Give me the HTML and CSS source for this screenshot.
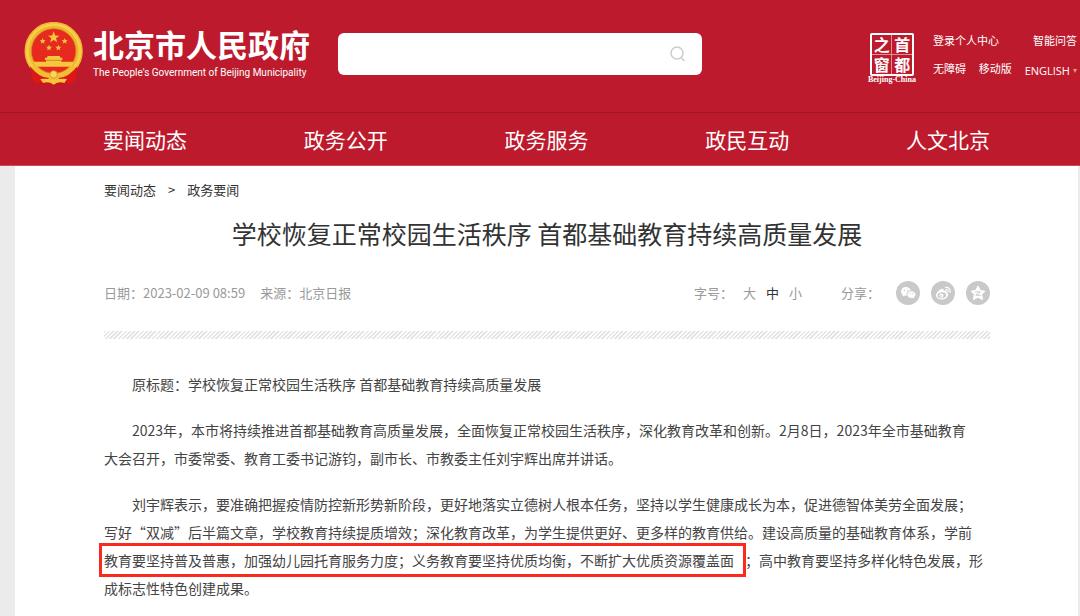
FILE: index.html
```
<!DOCTYPE html>
<html lang="zh-CN">
<head>
    <meta charset="utf-8">
    <title>学校恢复正常校园生活秩序 首都基础教育持续高质量发展</title>
    <meta name="viewport" content="width=device-width, initial-scale=1">
    <link rel="stylesheet" href="styles.css">
</head>
<body>
    <header class="header">
        <div class="top">
            <a class="logo" href="#">
                <svg class="emblem" viewBox="27 19 180 189" aria-hidden="true">
                    <path d="M50 150 Q44 180 56 190 L68 206 L100 204 L116 208 L134 204 L164 206 L178 190 Q188 176 182 150 Z" fill="#cf1015"/>
                    <circle cx="116" cy="106" r="77" fill="#e62a20" stroke="#efb62d" stroke-width="21"/>
                    <circle cx="116" cy="106" r="79" fill="none" stroke="#f8cd4c" stroke-width="8"/>
                    <circle cx="116" cy="106" r="67" fill="none" stroke="#c88219" stroke-width="2"/>
                    <g fill="#f6c63c">
                        <path d="M116 47 L120.5 59.500 L133 60 L123 68 L126.500 80 L116 73 L105.500 80 L109 68 L99 60 L111.500 59.500 Z"/>
                        <path d="M83 67 L85.500 73 L92 73.500 L87 78 L88.500 84 L83 80.500 L77.500 84 L79 78 L74 73.500 L80.500 73 Z"/>
                        <path d="M149 67 L151.500 73 L158 73.500 L153 78 L154.500 84 L149 80.500 L143.500 84 L145 78 L140 73.500 L146.500 73 Z"/>
                        <path d="M102 87 L104.500 93 L111 93.500 L106 98 L107.500 104 L102 100.500 L96.500 104 L98 98 L93 93.500 L99.500 93 Z"/>
                        <path d="M130 87 L132.500 93 L139 93.500 L134 98 L135.500 104 L130 100.500 L124.500 104 L126 98 L121 93.500 L127.500 93 Z"/>
                        <path d="M98 121 H134 L136 126 H142 V133 H139 V138 H177 L170 153 H62 L55 138 H93 V133 H90 V126 H96 Z"/>
                    </g>
                    <path d="M93 134 H139" stroke="#b87313" stroke-width="2"/>
                    <path d="M57 148 Q82 174 104 174 L116 166 L128 174 Q152 172 176 148 L182 157 Q160 186 137 184 L116 194 L95 184 Q70 186 50 157 Z" fill="#f3bd34"/>
                    <path d="M45 152 Q74 188 101 186 L96 204 L78 200 L68 207 L52 192 Z M187 152 Q158 188 131 186 L137 204 L154 200 L164 207 L181 192 Z" fill="#dc1717"/>
                    <path d="M76 190 Q98 188 116 193 Q134 188 156 190 L148 202 Q132 196 116 207 Q100 196 84 202 Z" fill="#f6c63c"/>
                    <circle cx="116" cy="176" r="11" fill="#fbd65a" stroke="#cf8a1d" stroke-width="2"/>
                </svg>
                <span class="logo-text">
                    <strong>北京市人民政府</strong>
                    <small>The People's Government of Beijing Municipality</small>
                </span>
            </a>
            <form class="search">
                <input type="text" aria-label="搜索">
                <button type="button" aria-label="搜索">
                    <svg viewBox="0 0 16 16" aria-hidden="true"><circle cx="7" cy="7" r="6"/><path d="M11 11.500 L14.500 15"/></svg>
                </button>
            </form>
            <a class="stamp" href="#">
                <span class="stamp-box"><b>之</b><b>首</b><b>窗</b><b>都</b></span>
                <span class="stamp-en">Beijing-China</span>
            </a>
            <div class="links">
                <div class="links-row">
                    <a href="#">登录个人中心</a>
                    <a href="#">智能问答</a>
                </div>
                <div class="links-row">
                    <a href="#">无障碍</a>
                    <a href="#">移动版</a>
                    <a class="english" href="#">ENGLISH<i class="arrow"></i></a>
                </div>
            </div>
        </div>
        <nav class="nav">
            <a href="#">要闻动态</a>
            <a href="#">政务公开</a>
            <a href="#">政务服务</a>
            <a href="#">政民互动</a>
            <a href="#">人文北京</a>
        </nav>
    </header>

    <main class="main">
        <div class="crumbs">
            <a href="#">要闻动态</a>
            <span>&gt;</span>
            <a href="#">政务要闻</a>
        </div>
        <h1>学校恢复正常校园生活秩序 首都基础教育持续高质量发展</h1>
        <div class="meta">
            <span class="date">日期：2023-02-09 08:59</span>
            <span>来源：北京日报</span>
            <div class="size">
                <span>字号：</span>
                <button type="button">大</button>
                <button type="button" class="on">中</button>
                <button type="button">小</button>
            </div>
            <div class="share">
                <span>分享：</span>
                <a href="#" aria-label="微信">
                    <svg viewBox="0 0 24 24">
                        <path fill="#fff" d="M10 6 C7 6 5 8 5 10.500 C5 12 5.700 13 6.800 13.800 L6.300 15.600 L8.300 14.600 Q9.500 15 10.600 14.900 C10 11.500 12.500 9.500 15 9.600 C14.300 7.300 12.300 6 10 6 Z"/>
                        <path fill="#fff" d="M15.300 10.200 C12.900 10.200 11.300 11.700 11.300 13.600 C11.300 15.500 13 17 15.300 17 Q16.200 17 17 16.700 L18.500 17.500 L18.100 16.100 C19 15.400 19.500 14.600 19.500 13.600 C19.500 11.700 17.700 10.200 15.300 10.200 Z"/>
                        <g fill="#c9c9c9"><circle cx="8.300" cy="9.300" r=".7"/><circle cx="11.700" cy="9.300" r=".7"/><circle cx="14" cy="12.700" r=".6"/><circle cx="16.800" cy="12.700" r=".6"/></g>
                    </svg>
                </a>
                <a href="#" aria-label="微博">
                    <svg viewBox="0 0 24 24">
                        <path fill="#fff" d="M10.500 8 C11.800 7.400 13 8 12.600 10 C14.500 9.300 16 9.700 15.500 11.600 C17 12.100 17.500 13.200 17 14.500 C16.300 17 13.500 18.600 10.500 18.500 C7 18.400 5 16.700 5 14.500 C5 12 8 9 10.500 8 Z"/>
                        <ellipse cx="10.800" cy="14.300" rx="4.300" ry="3" fill="#c9c9c9" transform="rotate(-8 10.800 14.300)"/>
                        <circle cx="10.400" cy="14.600" r="2.100" fill="#fff"/>
                        <circle cx="10" cy="14.900" r=".8" fill="#c9c9c9"/>
                        <path d="M14.500 6.500 C17.800 5.800 20 8.500 19 11.500 M14.800 8.600 C16.500 8.400 17.500 9.500 17 11" fill="none" stroke="#fff" stroke-width="1.200" stroke-linecap="round"/>
                    </svg>
                </a>
                <a href="#" aria-label="QQ空间">
                    <svg viewBox="0 0 24 24">
                        <path fill="#fff" stroke="#fff" stroke-linejoin="round" d="M12 5 L14.300 9.500 L19 10.200 L15.700 13.500 L16.600 18.700 L12 16.300 L7.400 18.700 L8.300 13.500 L5 10.200 L9.700 9.500 Z"/>
                        <path fill="none" stroke="#c9c9c9" d="M9.300 10.800 H14.300 L9.800 14.200 H14.800"/>
                    </svg>
                </a>
            </div>
        </div>
        <div class="stripe"></div>
        <article class="content">
            <p>原标题：学校恢复正常校园生活秩序 首都基础教育持续高质量发展</p>
            <p>2023年，本市将持续推进首都基础教育高质量发展，全面恢复正常校园生活秩序，深化教育改革和创新。2月8日，2023年全市基础教育<br>大会召开，市委常委、教育工委书记游钧，副市长、市教委主任刘宇辉出席并讲话。</p>
            <p>刘宇辉表示，要准确把握疫情防控新形势新阶段，更好地落实立德树人根本任务，坚持以学生健康成长为本，促进德智体美劳全面发展；<br>写好“双减”后半篇文章，学校教育持续提质增效；深化教育改革，为学生提供更好、更多样的教育供给。建设高质量的基础教育体系，学前<br><mark>教育要坚持普及普惠，加强幼儿园托育服务力度；义务教育要坚持优质均衡，不断扩大优质资源覆盖面</mark>；高中教育要坚持多样化特色发展，形<br>成标志性特色创建成果。</p>
        </article>
    </main>
</body>
</html>
```
FILE: styles.css
```
* {
    box-sizing: border-box;
}

body {
    margin: 0;
    background-color: #ebebeb;
    color: #333;
    font-family: "Noto Sans CJK SC", sans-serif;
    font-size: 13px;
}

a {
    color: inherit;
    text-decoration: none;
}

button {
    padding: 0;
    border: none;
    background: none;
    color: inherit;
    font: inherit;
    cursor: pointer;
}

.header {
    background-color: #bd1b2d;
    color: #fff;
}

.top {
    display: flex;
    align-items: flex-start;
    height: 113px;
    padding: 22px 3px 0 24px;
    border-bottom: 1px solid #9f1726;
}

.logo {
    display: flex;
    width: 314px;
}

.emblem {
    width: 60px;
    height: 63px;
    margin-right: 9px;
}

.logo-text {
    white-space: nowrap;
}

.logo-text strong,
.logo-text small {
    display: block;
}

.logo-text strong {
    font-size: 31px;
    line-height: 43px;
}

.logo-text small {
    font-family: Roboto, sans-serif;
    font-size: 10px;
    line-height: 16px;
}

.search {
    display: flex;
    align-items: center;
    width: 364px;
    height: 42px;
    margin-top: 11px;
    padding-right: 16px;
    border-radius: 6px;
    background-color: #fff;
}

.search input {
    flex: 1;
    min-width: 0;
    height: 100%;
    padding: 0 14px;
    border: none;
    outline: none;
    background: none;
    font: inherit;
}

.search svg {
    display: block;
    width: 16px;
    height: 16px;
    fill: none;
    stroke: #ccc;
    stroke-width: 1.5;
}

.stamp {
    display: flex;
    flex-direction: column;
    align-items: center;
    margin-top: 11px;
    margin-left: auto;
}

.stamp-box {
    display: grid;
    grid-template-columns: 1fr 1fr;
    gap: 1px;
    width: 44px;
    height: 43px;
    border: 2px solid #fff;
    border-radius: 2px;
    background-color: #e08f99;
}

.stamp-box b {
    background-color: #bd1b2d;
    font-size: 16px;
    line-height: 19px;
    text-align: center;
}

.stamp-en {
    font: bold 8px/8px "Liberation Serif", serif;
}

.links {
    width: 144px;
    margin-top: 8px;
    margin-left: 17px;
    font-size: 11px;
    line-height: 20px;
    white-space: nowrap;
}

.links-row {
    display: flex;
    justify-content: space-between;
    margin-bottom: 8px;
}

.english {
    padding-top: 3px;
    font-family: "Open Sans", sans-serif;
}

.arrow {
    display: inline-block;
    margin-left: 3px;
    border: 2px solid transparent;
    border-top: 4px solid #dfa36a;
    border-bottom: none;
    vertical-align: 2px;
}

.nav {
    display: flex;
    justify-content: space-between;
    padding: 0 90px 0 103px;
    border-bottom: 1px solid #d4475a;
    font-size: 21px;
    line-height: 52px;
}

.main {
    min-height: 451px;
    margin: 0 2px 0 15px;
    padding: 14px 88px 20px 89px;
    background-color: #fff;
}

.crumbs {
    display: flex;
    gap: 12px;
    line-height: 20px;
}

h1 {
    margin: 15px 0 0;
    font-size: 25px;
    font-weight: 400;
    line-height: 36px;
    text-align: center;
}

.meta {
    display: flex;
    align-items: center;
    margin-top: 30px;
    color: #999;
    line-height: 24px;
}

.date {
    margin-right: 15px;
}

.size {
    display: flex;
    gap: 10px;
    margin-left: auto;
}

.size .on {
    color: #333;
}

.share {
    display: flex;
    gap: 11px;
    margin-left: 39px;
}

.share span {
    margin-right: 5px;
}

.share a {
    width: 24px;
    height: 24px;
    border-radius: 50%;
    background-color: #c9c9c9;
}

.share svg {
    display: block;
}

.stripe {
    height: 8px;
    margin-top: 26px;
    background: repeating-linear-gradient(135deg, #e2e2e2 0, #e2e2e2 1px, #fff 2px, #fff 3px);
}

.content {
    margin-top: 31px;
    color: #444;
    font-size: 14px;
    line-height: 28px;
}

.content p {
    margin: 0 0 18px;
    text-indent: 2em;
}

.content mark {
    margin-right: 4px;
    padding: 2px 7px 2px 0;
    outline: 3px solid #fb2a1e;
    outline-offset: 2px;
    background: none;
    color: inherit;
}
```
